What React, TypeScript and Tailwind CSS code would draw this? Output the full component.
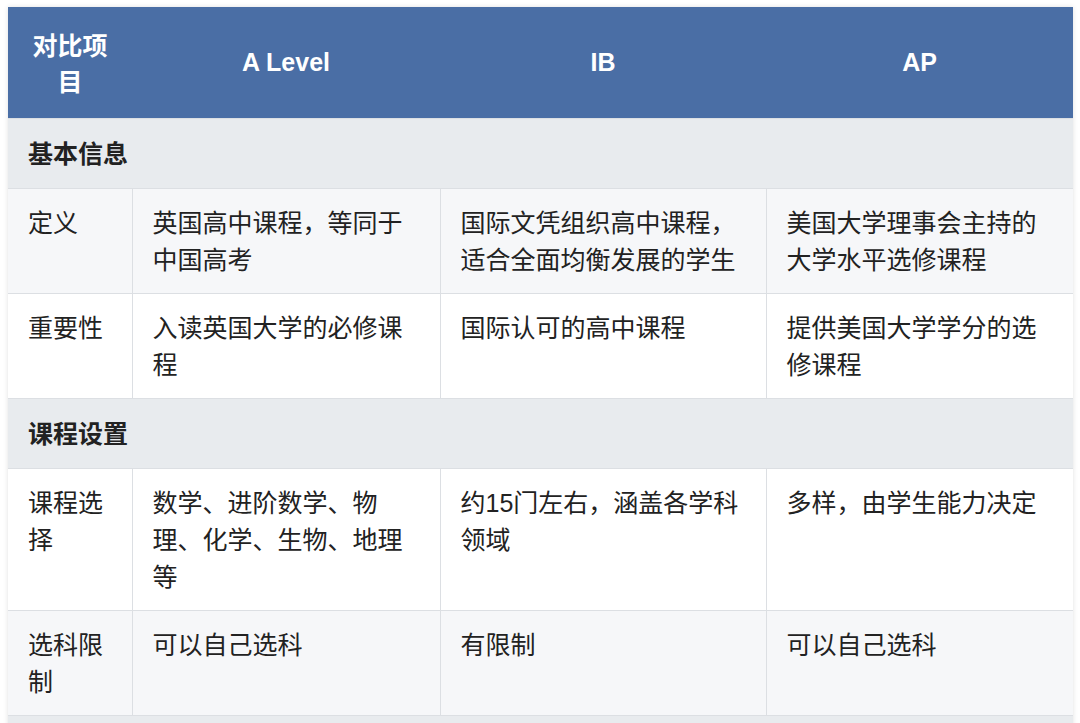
import { Fragment } from 'react'

type Row = { label: string; cells: [string, string, string] }
type Section = { title: string; rows: Row[] }

const sections: Section[] = [
  {
    title: '基本信息',
    rows: [
      {
        label: '定义',
        cells: [
          '英国高中课程，等同于中国高考',
          '国际文凭组织高中课程，适合全面均衡发展的学生',
          '美国大学理事会主持的大学水平选修课程',
        ],
      },
      {
        label: '重要性',
        cells: ['入读英国大学的必修课程', '国际认可的高中课程', '提供美国大学学分的选修课程'],
      },
    ],
  },
  {
    title: '课程设置',
    rows: [
      {
        label: '课程选择',
        cells: ['数学、进阶数学、物理、化学、生物、地理等', '约15门左右，涵盖各学科领域', '多样，由学生能力决定'],
      },
      {
        label: '选科限制',
        cells: ['可以自己选科', '有限制', '可以自己选科'],
      },
    ],
  },
  // next section, only its top edge is in view
  { title: '\u00a0', rows: [] },
]

const font = { fontFamily: '"Liberation Sans", "Noto Sans CJK SC", sans-serif' }

export default function App() {
  let stripe = 0
  return (
    <div className="h-[723px] overflow-hidden bg-white pt-[7px] pl-[8px]" style={font}>
      <table className="w-[1065px] table-fixed border-collapse text-[25px] leading-[37px] text-[#222] shadow-[0_0_5px_rgba(0,0,0,0.12)]">
        <colgroup>
          <col className="w-[124px]" />
          <col className="w-[308px]" />
          <col className="w-[326px]" />
          <col className="w-[307px]" />
        </colgroup>
        <thead>
          <tr className="bg-[#4a6ea5] text-white">
            <th className="px-5 pt-[21px] pb-[18px] text-center font-bold leading-[36px]">对比项目</th>
            <th className="px-5 text-center font-bold">A Level</th>
            <th className="px-5 text-center font-bold">IB</th>
            <th className="px-5 text-center font-bold">AP</th>
          </tr>
        </thead>
        <tbody>
          {sections.map((s) => {
            stripe += 1
            return (
              <Fragment key={s.title}>
                <tr className="border-t border-[#dcdfe3] bg-[#e8ebee]">
                  <td colSpan={4} className="px-5 pt-[17px] pb-[15px] font-bold">
                    {s.title}
                  </td>
                </tr>
                {s.rows.map((r) => {
                  stripe += 1
                  const light = stripe % 2 === 0
                  return (
                    <tr
                      key={r.label}
                      className={light ? 'border-t border-[#dcdfe3] bg-[#f6f7f9]' : 'border-t border-[#dcdfe3] bg-white'}
                    >
                      <td className="border-r border-[#dcdfe3] px-5 pt-[16px] pb-[14px] align-top">{r.label}</td>
                      {r.cells.map((c, i) => (
                        <td
                          key={i}
                          className="border-r border-[#dcdfe3] px-5 pt-[16px] pb-[14px] align-top last:border-r-0"
                        >
                          {c}
                        </td>
                      ))}
                    </tr>
                  )
                })}
              </Fragment>
            )
          })}
        </tbody>
      </table>
    </div>
  )
}
